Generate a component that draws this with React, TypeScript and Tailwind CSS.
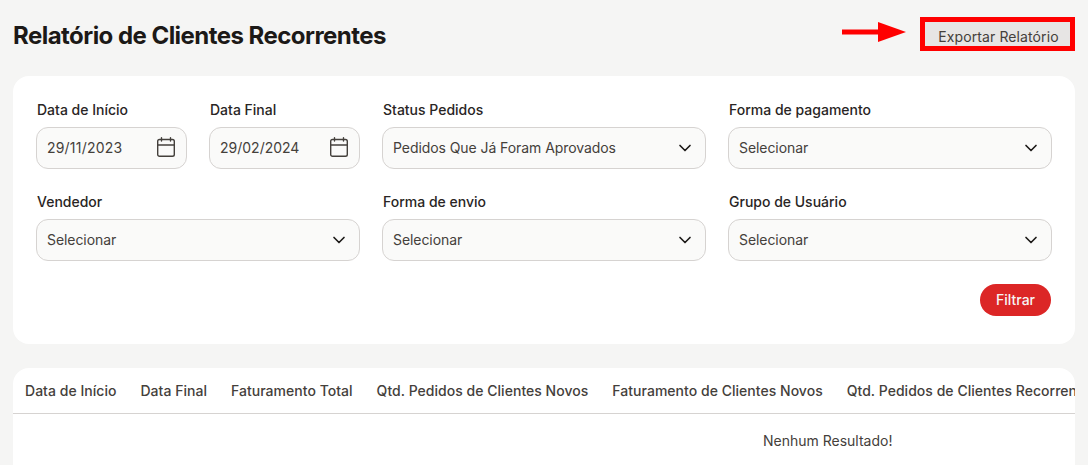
import { ChevronDown } from "lucide-react";

const DateField = ({ label, value, valueClass }: { label: string; value: string; valueClass?: string }) => (
  <div className="flex-1">
    <label className="block pl-px text-sm leading-5 font-[450] text-stone-800 mb-[7px]">{label}</label>
    <div className="h-[42px] flex items-center justify-between pl-2.5 pr-[11px] rounded-xl border border-stone-300 bg-stone-50">
      <span className={`text-sm text-stone-700 ${valueClass ?? ""}`}>{value}</span>
      <svg className="mb-0.5" width="18" height="20" viewBox="0 0 18 20" fill="none" stroke="#44403c" strokeWidth="1.4" strokeLinecap="round" strokeLinejoin="round">
        <path d="M4.5 0.7v3.3M13.5 0.7v3.3" />
        <rect x="0.7" y="2.5" width="16.6" height="16.8" rx="1.8" />
        <path d="M0.7 8h16.6" />
      </svg>
    </div>
  </div>
);

const SelectField = ({ label, value }: { label: string; value: string }) => (
  <div>
    <label className="block pl-px text-sm leading-5 font-[450] text-stone-800 mb-[7px]">{label}</label>
    <div className="h-[42px] flex items-center justify-between pl-2.5 pr-[10px] rounded-xl border border-stone-300 bg-stone-50">
      <span className="text-sm tracking-[-0.07px] text-stone-700">{value}</span>
      <ChevronDown className="w-5 h-5 text-stone-900" strokeWidth={2} />
    </div>
  </div>
);

const columns = [
  "Data de Início",
  "Data Final",
  "Faturamento Total",
  "Qtd. Pedidos de Clientes Novos",
  "Faturamento de Clientes Novos",
  "Qtd. Pedidos de Clientes Recorrentes",
];

export default function App() {
  return (
    <div className="w-[1088px] h-[465px] overflow-hidden bg-[#f5f5f4] px-[13px] font-['Inter',sans-serif]">
      <div className="h-[76px] flex items-start justify-between">
        <h1 className="mt-5 text-2xl leading-8 font-bold tracking-[-0.54px] text-stone-900">
          Relatório de Clientes Recorrentes
        </h1>
        <div className="flex items-start">
          <svg className="mt-[21px] mr-[13px]" width="65" height="22" viewBox="0 0 65 22">
            <rect x="0" y="8.5" width="38" height="5" fill="#ff0000" />
            <polygon points="36,1 64,11 36,21" fill="#ff0000" />
          </svg>
          <div className="mt-[17px] w-[155px] h-[34px] border-[5px] border-[#ff0000] bg-[#e7e5e4] flex items-end justify-center pl-0.5">
            <span className="text-sm leading-[18px] tracking-[0.1px] text-stone-700">Exportar Relatório</span>
          </div>
        </div>
      </div>

      <div className="h-[268px] rounded-2xl bg-white px-[23px] pt-6">
        <div className="grid grid-cols-3 gap-x-[22px] gap-y-[23px]">
          <div className="flex gap-[22px]">
            <DateField label="Data de Início" value="29/11/2023" valueClass="tracking-[0.2px]" />
            <DateField label="Data Final" value="29/02/2024" />
          </div>
          <SelectField label="Status Pedidos" value="Pedidos Que Já Foram Aprovados" />
          <SelectField label="Forma de pagamento" value="Selecionar" />
          <SelectField label="Vendedor" value="Selecionar" />
          <SelectField label="Forma de envio" value="Selecionar" />
          <SelectField label="Grupo de Usuário" value="Selecionar" />
        </div>
        <div className="flex justify-end mt-[23px] pr-px">
          <button className="h-8 w-[71px] rounded-full bg-[#dc2626] text-sm font-[450] text-stone-100">Filtrar</button>
        </div>
      </div>

      <div className="mt-6 rounded-t-2xl bg-white overflow-hidden">
        <div className="h-[46px] flex items-center gap-6 px-3 border-b border-stone-300 whitespace-nowrap">
          {columns.map((c) => (
            <span key={c} className="text-sm font-[450] tracking-[0.03px] text-stone-700">{c}</span>
          ))}
        </div>
        <div className="h-[60px] pt-[17px] pl-[750px] text-sm text-stone-700">Nenhum Resultado!</div>
      </div>
    </div>
  );
}
